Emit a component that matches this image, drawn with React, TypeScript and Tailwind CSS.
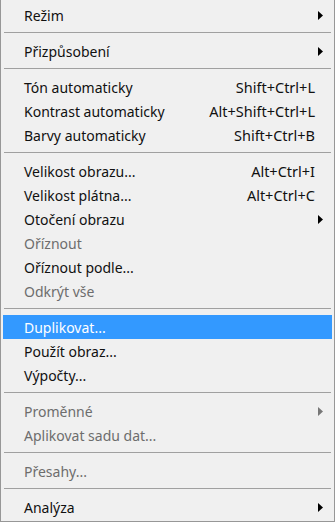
import { Fragment } from 'react';

type Item =
  | { sep: true }
  | { label: string; shortcut?: string; sub?: boolean; disabled?: boolean; active?: boolean };

const items: Item[] = [
  { label: 'Režim', sub: true },
  { sep: true },
  { label: 'Přizpůsobení', sub: true },
  { sep: true },
  { label: 'Tón automaticky', shortcut: 'Shift+Ctrl+L' },
  { label: 'Kontrast automaticky', shortcut: 'Alt+Shift+Ctrl+L' },
  { label: 'Barvy automaticky', shortcut: 'Shift+Ctrl+B' },
  { sep: true },
  { label: 'Velikost obrazu...', shortcut: 'Alt+Ctrl+I' },
  { label: 'Velikost plátna...', shortcut: 'Alt+Ctrl+C' },
  { label: 'Otočení obrazu', sub: true },
  { label: 'Oříznout', disabled: true },
  { label: 'Oříznout podle...' },
  { label: 'Odkrýt vše', disabled: true },
  { sep: true },
  { label: 'Duplikovat...', active: true },
  { label: 'Použít obraz...' },
  { label: 'Výpočty...' },
  { sep: true },
  { label: 'Proměnné', sub: true, disabled: true },
  { label: 'Aplikovat sadu dat...', disabled: true },
  { sep: true },
  { label: 'Přesahy...', disabled: true },
  { sep: true },
  { label: 'Analýza', sub: true },
];

function Arrow({ color }: { color: string }) {
  return (
    <svg width="5" height="9" viewBox="0 0 5 9" className="absolute right-[9px] top-[8px]">
      <path d="M0 0 L5 4.5 L0 9 Z" fill={color} />
    </svg>
  );
}

export default function App() {
  return (
    <div
      className="w-[335px] h-[522px] bg-[#f0f0f0] border-x border-b border-[#979797] pt-[3px] px-[2px] text-[#111]"
      style={{ fontFamily: '"Noto Sans", "Open Sans", sans-serif' }}
    >
      {items.map((it, i) => {
        if ('sep' in it) {
          return (
            <div key={i} className="h-[12px] pt-[5px] px-px">
              <div className="h-px bg-[#a0a0a0]" />
            </div>
          );
        }
        const color = it.active ? 'text-white' : it.disabled ? 'text-[#6d6d6d]' : 'text-[#111]';
        return (
          <Fragment key={i}>
            <div
              className={`relative h-[24px] flex items-center pl-[21px] pr-[17px] pt-px ${
                it.active ? 'bg-[#3399ff]' : ''
              } ${color}`}
            >
              <span className="flex-1 leading-none text-[14px]">{it.label}</span>
              {it.shortcut && <span className="leading-none text-[14.5px]">{it.shortcut}</span>}
              {it.sub && <Arrow color={it.disabled ? '#777' : '#000'} />}
            </div>
          </Fragment>
        );
      })}
    </div>
  );
}
